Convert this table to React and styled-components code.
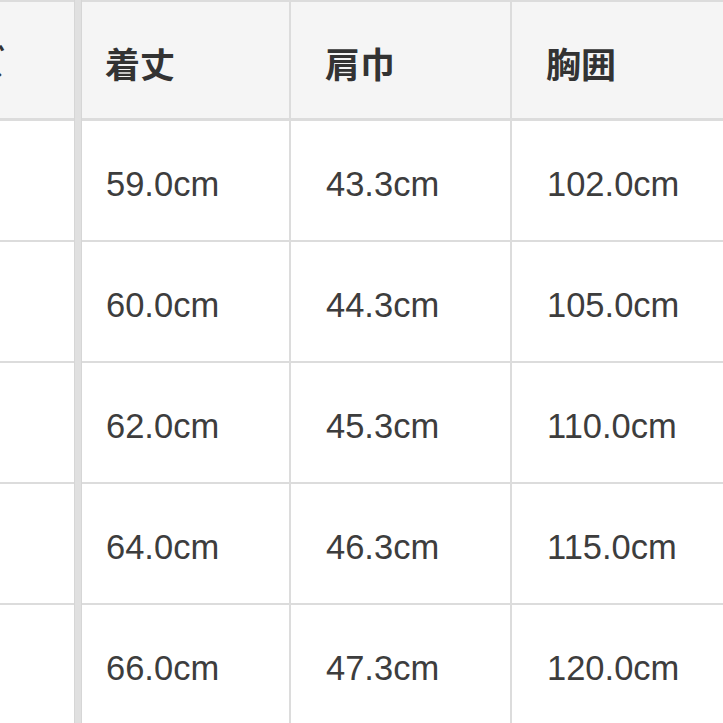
import React from "react";
import styled, { createGlobalStyle } from "styled-components";

const GlobalStyle = createGlobalStyle`
  html, body {
    margin: 0;
    padding: 0;
    background: #ffffff;
    overflow: hidden;
  }
  body {
    font-family: "Liberation Sans", "Noto Sans CJK JP", sans-serif;
  }
`;

const rows = [
  ["59.0cm", "43.3cm", "102.0cm"],
  ["60.0cm", "44.3cm", "105.0cm"],
  ["62.0cm", "45.3cm", "110.0cm"],
  ["64.0cm", "46.3cm", "115.0cm"],
  ["66.0cm", "47.3cm", "120.0cm"],
];

const headers = ["着丈", "肩巾", "胸囲"];

function App() {
  return (
    <>
      <GlobalStyle />
      <Table>
        <HeadRow>
          <SizeCell $head>
            <SizeLabel>サイズ</SizeLabel>
          </SizeCell>
          <Divider />
          {headers.map((h, i) => (
            <HeadCell key={h} $first={i === 0}>
              {h}
            </HeadCell>
          ))}
        </HeadRow>
        {rows.map((r, idx) => (
          <Row key={idx}>
            <SizeCell />
            <Divider />
            {r.map((v, i) => (
              <Cell key={i} $first={i === 0}>
                {v}
              </Cell>
            ))}
          </Row>
        ))}
      </Table>
    </>
  );
}

const Table = styled.div`
  width: 732px;
  display: flex;
  flex-direction: column;
`;

const Row = styled.div`
  display: flex;
  height: 121px;
  box-sizing: border-box;
  border-bottom: 2px solid #dcdcdc;
`;

const HeadRow = styled(Row)`
  background: #f5f5f5;
  border-top: 2px solid #dcdcdc;
  border-bottom-width: 3px;
`;

const SizeCell = styled.div`
  width: 74px;
  flex-shrink: 0;
  overflow: hidden;
  display: flex;
  align-items: center;
  justify-content: flex-end;
  padding-right: 69px;
  box-sizing: border-box;
  white-space: nowrap;
`;

const SizeLabel = styled.span`
  font-family: "Noto Sans CJK JP", sans-serif;
  font-weight: 700;
  font-size: 35px;
  color: #333333;
`;

const Divider = styled.div`
  width: 8px;
  flex-shrink: 0;
  margin: -3px 0;
  background: #e0e0e0;
  border-left: 1px solid #d6d6d6;
  border-right: 1px solid #d6d6d6;
  box-sizing: border-box;
`;

const Cell = styled.div`
  width: ${(p) => (p.$first ? "209px" : "221px")};
  flex-shrink: 0;
  box-sizing: border-box;
  border-right: 2px solid #dcdcdc;
  padding-left: ${(p) => (p.$first ? "24px" : "35px")};
  display: flex;
  align-items: center;
  font-family: "Liberation Sans", Arial, sans-serif;
  font-size: 34.5px;
  color: #3d3d3d;
  padding-top: 8px;
`;

const HeadCell = styled(Cell)`
  font-family: "Noto Sans CJK JP", sans-serif;
  font-weight: 700;
  font-size: 35px;
  color: #333333;
  padding-left: ${(p) => (p.$first ? "23px" : "34px")};
  padding-top: 4px;
`;

export default App;
